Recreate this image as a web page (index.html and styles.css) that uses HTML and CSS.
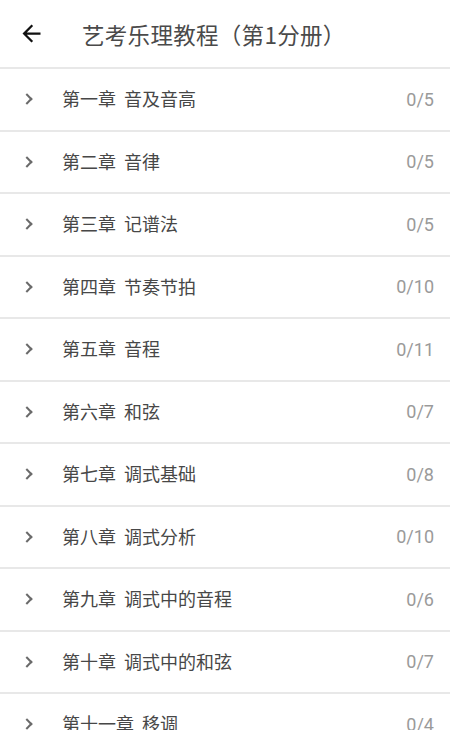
FILE: index.html
```html
<!DOCTYPE html>
<html lang="zh-CN">
<head>
  <meta charset="UTF-8">
  <meta name="viewport" content="width=device-width, initial-scale=1.0">
  <title>艺考乐理教程（第1分册）</title>
  <link rel="stylesheet" href="styles.css">
</head>
<body>
  <div class="toolbar">
    <button class="back-button" aria-label="返回">
      <svg width="27" height="27" viewBox="0 0 24 24">
        <path d="M20 11H7.83l5.59-5.59L12 4l-8 8 8 8 1.41-1.41L7.83 13H20v-2z" fill="#111"/>
      </svg>
    </button>
    <h1 class="title">艺考乐理教程（第1分册）</h1>
  </div>

  <ul class="chapter-list">
    <li class="chapter">
      <span class="chevron"></span>
      <span class="chapter-name">第一章&nbsp;&nbsp;音及音高</span>
      <span class="chapter-progress">0/5</span>
    </li>
    <li class="chapter">
      <span class="chevron"></span>
      <span class="chapter-name">第二章&nbsp;&nbsp;音律</span>
      <span class="chapter-progress">0/5</span>
    </li>
    <li class="chapter">
      <span class="chevron"></span>
      <span class="chapter-name">第三章&nbsp;&nbsp;记谱法</span>
      <span class="chapter-progress">0/5</span>
    </li>
    <li class="chapter">
      <span class="chevron"></span>
      <span class="chapter-name">第四章&nbsp;&nbsp;节奏节拍</span>
      <span class="chapter-progress">0/10</span>
    </li>
    <li class="chapter">
      <span class="chevron"></span>
      <span class="chapter-name">第五章&nbsp;&nbsp;音程</span>
      <span class="chapter-progress">0/11</span>
    </li>
    <li class="chapter">
      <span class="chevron"></span>
      <span class="chapter-name">第六章&nbsp;&nbsp;和弦</span>
      <span class="chapter-progress">0/7</span>
    </li>
    <li class="chapter">
      <span class="chevron"></span>
      <span class="chapter-name">第七章&nbsp;&nbsp;调式基础</span>
      <span class="chapter-progress">0/8</span>
    </li>
    <li class="chapter">
      <span class="chevron"></span>
      <span class="chapter-name">第八章&nbsp;&nbsp;调式分析</span>
      <span class="chapter-progress">0/10</span>
    </li>
    <li class="chapter">
      <span class="chevron"></span>
      <span class="chapter-name">第九章&nbsp;&nbsp;调式中的音程</span>
      <span class="chapter-progress">0/6</span>
    </li>
    <li class="chapter">
      <span class="chevron"></span>
      <span class="chapter-name">第十章&nbsp;&nbsp;调式中的和弦</span>
      <span class="chapter-progress">0/7</span>
    </li>
    <li class="chapter">
      <span class="chevron"></span>
      <span class="chapter-name">第十一章&nbsp;&nbsp;移调</span>
      <span class="chapter-progress">0/4</span>
    </li>
  </ul>
</body>
</html>
```

FILE: styles.css
```css
body {
  margin: 0;
  padding: 0;
  background: #fff;
  font-family: "Noto Sans CJK SC", "Noto Sans", sans-serif;
  overflow: hidden;
}

.toolbar {
  display: flex;
  align-items: center;
  height: 67px;
  border-bottom: 2px solid #e8e8e8;
}

.back-button {
  display: flex;
  align-items: center;
  justify-content: center;
  width: 27px;
  height: 27px;
  margin-left: 18px;
  padding: 0;
  border: none;
  background: none;
}

.title {
  margin: 0 0 0 37px;
  font-size: 22.5px;
  font-weight: normal;
  color: #4a4a4a;
  letter-spacing: 0.3px;
}

.chapter-list {
  list-style: none;
  margin: 0;
  padding: 0;
}

.chapter {
  display: flex;
  align-items: center;
  height: 60.5px;
  padding: 0 16px 0 25px;
  border-bottom: 2px solid #e8e8e8;
}

/* small grey chevron drawn with borders */
.chevron {
  width: 6px;
  height: 6px;
  border-top: 2px solid #6a6a6a;
  border-right: 2px solid #6a6a6a;
  transform: rotate(45deg);
  margin-left: -2px;
}

.chapter-name {
  flex: 1;
  margin-left: 31px;
  font-size: 18px;
  color: #474747;
  padding-bottom: 2px;
}

.chapter-progress {
  font-family: Roboto, "Noto Sans", sans-serif;
  font-size: 18px;
  color: #9a9a9a;
}
```
